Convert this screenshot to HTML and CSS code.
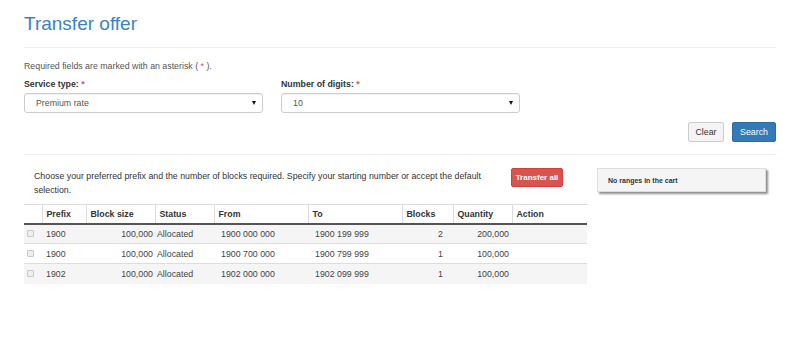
FILE: index.html
```html
<!DOCTYPE html>
<html>
<head>
<meta charset="utf-8">
<link rel="stylesheet" href="styles.css">
</head>
<body>
<div class="page">
  <h1 class="title">Transfer offer</h1>
  <div class="rule"></div>
  <p class="req">Required fields are marked with an asterisk ( <span class="star">*</span> ).</p>
  <div class="form-row">
    <div class="field">
      <div class="label">Service type: <span class="star">*</span></div>
      <div class="select"><span>Premium rate</span><span class="caret"></span></div>
    </div>
    <div class="field">
      <div class="label">Number of digits: <span class="star">*</span></div>
      <div class="select"><span>10</span><span class="caret"></span></div>
    </div>
  </div>
  <div class="actions">
    <button class="btn btn-default">Clear</button>
    <button class="btn btn-primary">Search</button>
  </div>
  <div class="rule rule2"></div>
  <div class="lower">
    <div class="main">
      <div class="intro">
        <p class="intro-text">Choose your preferred prefix and the number of blocks required. Specify your starting number or accept the default selection.</p>
        <button class="btn btn-danger">Transfer all</button>
      </div>
      <table class="grid">
        <colgroup>
          <col class="c0"><col class="c1"><col class="c2"><col class="c3"><col class="c4"><col class="c5"><col class="c6"><col class="c7"><col class="c8">
        </colgroup>
        <thead>
          <tr><th></th><th>Prefix</th><th>Block size</th><th>Status</th><th>From</th><th>To</th><th>Blocks</th><th>Quantity</th><th>Action</th></tr>
        </thead>
        <tbody>
          <tr class="odd"><td><span class="cb"></span></td><td class="pfx">1900</td><td class="bs">100,000</td><td class="st">Allocated</td><td class="rng">1900 000 000</td><td class="rng">1900 199 999</td><td class="blk">2</td><td class="qty">200,000</td><td></td></tr>
          <tr><td><span class="cb"></span></td><td class="pfx">1900</td><td class="bs">100,000</td><td class="st">Allocated</td><td class="rng">1900 700 000</td><td class="rng">1900 799 999</td><td class="blk">1</td><td class="qty">100,000</td><td></td></tr>
          <tr class="odd"><td><span class="cb"></span></td><td class="pfx">1902</td><td class="bs">100,000</td><td class="st">Allocated</td><td class="rng">1902 000 000</td><td class="rng">1902 099 999</td><td class="blk">1</td><td class="qty">100,000</td><td></td></tr>
        </tbody>
      </table>
    </div>
    <div class="side">
      <div class="cart">No ranges in the cart</div>
    </div>
  </div>
</div>
</body>
</html>
```
FILE: styles.css
```css
* { box-sizing: border-box; }
html, body { margin: 0; padding: 0; background: #fff; }
body {
  font-family: "Liberation Sans", Arial, sans-serif;
  font-size: 8.8px;
  color: #333;
}
.page { padding: 13px 24px 0 24px; }
.title {
  margin: 0 0 12px 0;
  font-size: 19px;
  line-height: 22px;
  font-weight: 400;
  color: #3a83c1;
}
.rule { height: 1px; background: #eee; }
.rule2 { margin-top: 12px; }
.req {
  margin: 12px 0 0 0;
  line-height: 13px;
  color: #555;
}
.star { color: #d9534f; }
.form-row {
  display: flex;
  gap: 18px;
  margin-top: 5px;
}
.field { width: 239px; }
.label {
  font-weight: 700;
  line-height: 13px;
  margin-bottom: 2px;
  color: #333;
}
.select {
  height: 20px;
  border: 1px solid #ccc;
  border-radius: 3px;
  display: flex;
  align-items: center;
  justify-content: space-between;
  padding: 0 6px 0 11px;
  color: #555;
  box-shadow: inset 0 1px 1px rgba(0,0,0,.06);
}
.caret {
  width: 0; height: 0;
  border-left: 2.5px solid transparent;
  border-right: 2.5px solid transparent;
  border-top: 4px solid #111;
}
.actions {
  display: flex;
  justify-content: flex-end;
  gap: 8px;
  margin-top: 9px;
}
.btn {
  font-family: inherit;
  font-size: 8.8px;
  height: 20px;
  line-height: 18px;
  padding: 0;
  border-radius: 2px;
  border: 1px solid transparent;
  cursor: pointer;
}
.btn-default { width: 36px; background: #f4f4f4; border-color: #ccc; color: #333; }
.btn-primary { width: 44px; background: #337ab7; border-color: #2e6da4; color: #fff; }
.btn-danger {
  width: 52px; height: 19px; line-height: 17px;
  background: #d9534f; border-color: #d43f3a; color: #fff;
  font-size: 8px; font-weight: 700;
  flex: none;
}
.lower {
  display: flex;
  margin-top: 13px;
}
.main { width: 563px; }
.side { flex: 1; padding: 0 10px; }
.intro { display: flex; align-items: flex-start; }
.intro-text {
  margin: 2px 0 0 10px;
  width: 466px;
  line-height: 13.5px;
  color: #333;
}
.intro .btn-danger { margin-left: 11px; }
.cart {
  height: 24px;
  background: #f5f5f5;
  border: 1px solid #ddd;
  box-shadow: 2px 2px 2px rgba(0,0,0,.45);
  font-size: 7px;
  font-weight: 700;
  padding-left: 10px;
  display: flex;
  align-items: center;
  color: #333;
}
.grid {
  margin-top: 7px;
  width: 563px;
  border-collapse: collapse;
  table-layout: fixed;
}
.c0 { width: 18px; } .c1 { width: 44px; } .c2 { width: 69px; } .c3 { width: 59px; }
.c4 { width: 94px; } .c5 { width: 94px; } .c6 { width: 51px; } .c7 { width: 59px; } .c8 { width: 75px; }
.grid th {
  height: 19px;
  padding: 0 4px;
  text-align: left;
  font-weight: 700;
  border-top: 1px solid #ddd;
  border-left: 1px solid #ddd;
  border-bottom: 2px solid #555;
  color: #333;
}
.grid th:first-child { border-left: none; }
.grid td {
  height: 20px;
  padding: 0 4px;
  border-top: 1px solid #ddd;
  color: #444;
  white-space: nowrap;
}
.grid tr.odd td { background: #f5f5f5; }
.cb {
  display: block;
  width: 7px; height: 7px;
  margin-left: -1px;
  border: 1px solid #c8c8c8;
  border-radius: 1px;
  background: #eee;
}
.grid td.bs { text-align: right; padding-right: 2px; }
.grid td.st { padding-left: 2px; }
.grid td.rng { padding-left: 7px; }
.grid td.blk { text-align: right; padding-right: 10px; }
.grid td.qty { text-align: right; padding-right: 3px; }
```
